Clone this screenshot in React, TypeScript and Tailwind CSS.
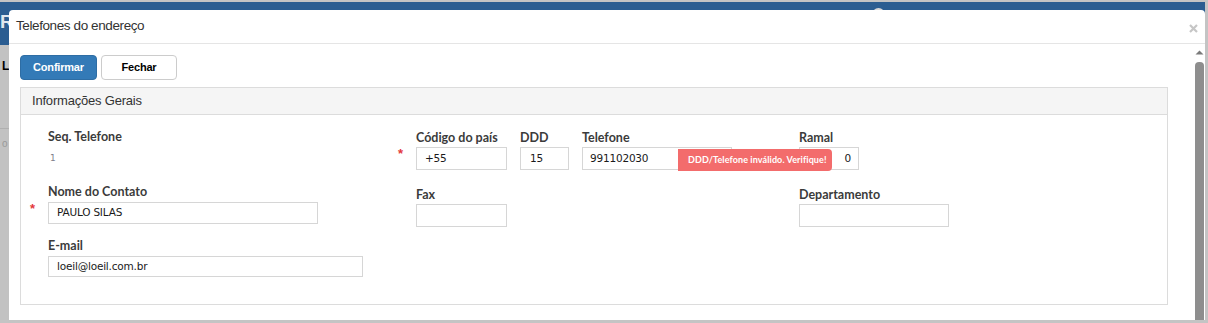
import React from "react";

const sans = "font-['Liberation_Sans',Arial,sans-serif]";
const labelCls = "text-[12.5px] leading-[15px] font-bold text-[#3b3b3b] font-['Lato',sans-serif] whitespace-nowrap";
const inputCls =
  "border border-[#d6d6d6] bg-white px-[8px] flex items-center text-[10.5px] tracking-[-0.2px] text-[#1a1a1a] font-['DejaVu_Sans',sans-serif] whitespace-nowrap";

function Asterisk() {
  return (
    <span className={`absolute left-[-18px] top-0 text-[13px] font-bold leading-none text-[#e3383b] ${sans}`}>*</span>
  );
}

export default function App() {
  return (
    <div className={`relative w-[1208px] h-[323px] overflow-hidden bg-[#c4c4c4] ${sans}`}>
      {/* page behind the modal */}
      <div className="pt-[2px] w-[1205px]">
        <div className="h-[43px] bg-[#2b5d91] flex items-start">
          <span className="ml-0 mt-[10px] text-[19px] font-bold leading-[20px] text-[#dfe6ee]">R</span>
          <span className="ml-[858px] mt-[6px] w-[13px] h-[13px] rounded-full bg-[#d8d8d8]"></span>
        </div>
        <div className="h-[275px] bg-[#c2c2c2] flex flex-col">
          <span className="mt-[14px] ml-[2px] text-[12px] font-bold leading-[14px] text-black">L</span>
          <div className="mt-[55px] h-[1px] bg-[#b0b0b0]"></div>
          <span className="mt-[9px] ml-[2px] text-[10px] leading-[12px] text-[#999]">o</span>
        </div>
      </div>

      {/* modal */}
      <div className="absolute left-[9px] top-[10px] w-[1196px] h-[310px] bg-white rounded-t-[4px] flex flex-col overflow-hidden">
        <div className="h-[34px] shrink-0 border-b border-[#e5e5e5] flex items-center justify-between pl-[7px] pr-[7px]">
          <span className="text-[13.5px] tracking-[-0.4px] text-[#333] leading-[16px] -mt-[2px]">Telefones do endereço</span>
          <svg width="9" height="9" viewBox="0 0 9 9" className="mt-[4px]">
            <path d="M1 1 L8 8 M8 1 L1 8" stroke="#c6c6c6" strokeWidth="2.2" />
          </svg>
        </div>

        <div className="flex flex-1 min-h-0">
          <div className="flex-1 pl-[11px] pt-[11px]">
            <div className="flex gap-[4px]">
              <button className="w-[77px] h-[25px] rounded-[4px] bg-[#337ab7] border border-[#2e6da4] text-white font-bold text-[11px] tracking-[-0.2px]">
                Confirmar
              </button>
              <button className="w-[76px] h-[25px] rounded-[4px] bg-white border border-[#cccccc] text-black font-bold text-[11px] tracking-[-0.2px]">
                Fechar
              </button>
            </div>

            <div className="mt-[7px] w-[1148px] border border-[#dcdcdc]">
              <div className="h-[27px] bg-[#f5f5f5] border-b border-[#dcdcdc] flex items-center pl-[11px]">
                <span className="text-[13px] tracking-[-0.2px] text-[#333]">Informações Gerais</span>
              </div>

              <div className="flex pl-[27px] pt-[14px] pb-[27px]">
                {/* column 1 */}
                <div className="w-[368px] flex flex-col">
                  <span className={labelCls}>Seq. Telefone</span>
                  <span className="mt-[9px] pl-[2px] text-[9px] leading-[11px] text-[#80808a] font-['DejaVu_Sans',sans-serif]">1</span>
                  <span className={`mt-[20px] ${labelCls}`}>Nome do Contato</span>
                  <div className="relative mt-[3px]">
                    <Asterisk />
                    <div className={`${inputCls} w-[270px] h-[22px]`}>PAULO SILAS</div>
                  </div>
                  <span className={`mt-[14px] ${labelCls}`}>E-mail</span>
                  <div className={`${inputCls} mt-[3px] w-[315px] h-[21px]`}>loeil@loeil.com.br</div>
                </div>

                {/* column 2 */}
                <div className="w-[104px] pt-[1px] flex flex-col">
                  <span className={labelCls}>Código do país</span>
                  <div className="relative mt-[2px]">
                    <Asterisk />
                    <div className={`${inputCls} w-[91px] h-[23px]`}>+55</div>
                  </div>
                  <span className={`mt-[17px] ${labelCls}`}>Fax</span>
                  <div className={`${inputCls} mt-[2px] w-[91px] h-[23px]`}></div>
                </div>

                {/* column 3 */}
                <div className="w-[62px] pt-[1px] flex flex-col">
                  <span className={labelCls}>DDD</span>
                  <div className={`${inputCls} mt-[2px] w-[49px] h-[23px] pl-[9px]`}>15</div>
                </div>

                {/* column 4 */}
                <div className="w-[217px] pt-[1px] flex flex-col">
                  <span className={labelCls}>Telefone</span>
                  <div className="relative mt-[2px]">
                    <div className={`${inputCls} w-[150px] h-[23px] pl-[7px]`}>991102030</div>
                    <div className="absolute z-10 left-[96px] top-[2px] w-[154px] h-[22px] bg-[#f36c6c] rounded-r-[4px] flex items-center pl-[10px] text-white font-bold text-[9px] tracking-[0.1px] font-['Lato',sans-serif] whitespace-nowrap">
                      DDD/Telefone inválido. Verifique!
                    </div>
                  </div>
                </div>

                {/* column 5 */}
                <div className="pt-[1px] flex flex-col">
                  <span className={labelCls}>Ramal</span>
                  <div className={`${inputCls} mt-[2px] w-[60px] h-[23px] justify-end pr-[7px]`}>0</div>
                  <span className={`mt-[17px] ${labelCls}`}>Departamento</span>
                  <div className={`${inputCls} mt-[2px] w-[150px] h-[23px]`}></div>
                </div>
              </div>
            </div>
          </div>

          {/* scrollbar */}
          <div className="w-[9px] mr-[1px] flex flex-col items-center pt-[6px]">
            <svg width="9" height="5" viewBox="0 0 9 5">
              <path d="M0.5 4.5 L4.5 0.5 L8.5 4.5 Z" fill="#7a7a7a" />
            </svg>
            <div className="mt-[7px] w-[9px] flex-1 rounded-t-[4px] bg-[#8e8e8e]"></div>
          </div>
        </div>
      </div>
    </div>
  );
}
